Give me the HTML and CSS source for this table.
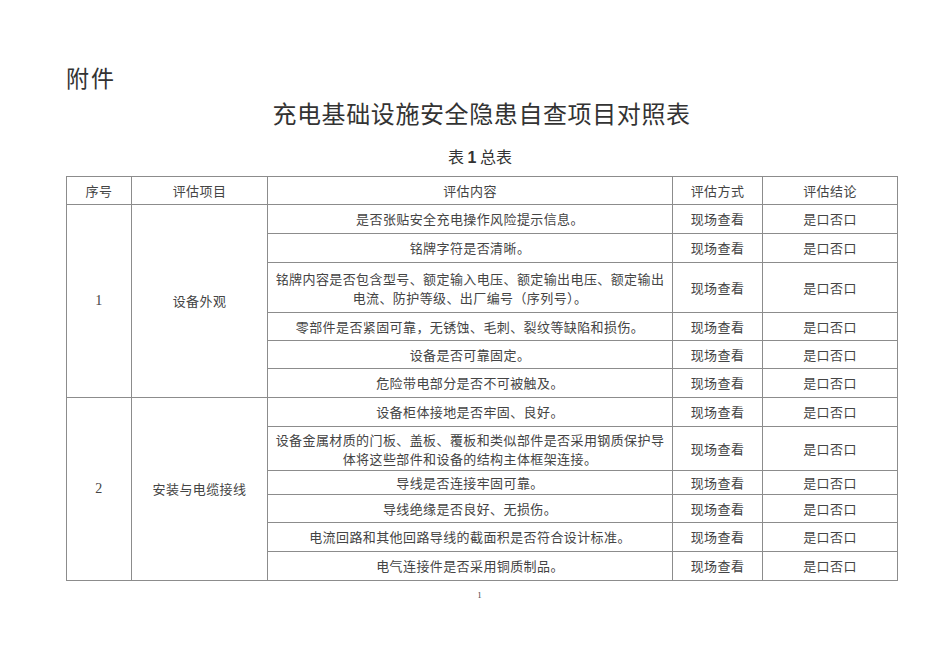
FILE: index.html
```html
<!DOCTYPE html>
<html lang="zh-CN">
<head>
<meta charset="utf-8">
<title>充电基础设施安全隐患自查项目对照表</title>
<link rel="stylesheet" href="styles.css">
</head>
<body>
<div class="page">
  <div class="attach">附件</div>
  <div class="head">
    <h1 class="title">充电基础设施安全隐患自查项目对照表</h1>
    <div class="subtitle">表 <b class="num">1</b> 总表</div>
  </div>
  <table class="grid">
    <colgroup>
      <col class="c-no">
      <col class="c-item">
      <col class="c-content">
      <col class="c-method">
      <col class="c-result">
    </colgroup>
    <thead>
      <tr class="h28"><th>序号</th><th>评估项目</th><th>评估内容</th><th>评估方式</th><th>评估结论</th></tr>
    </thead>
    <tbody>
      <tr class="h29">
        <td rowspan="6" class="no">1</td>
        <td rowspan="6">设备外观</td>
        <td>是否张贴安全充电操作风险提示信息。</td><td>现场查看</td><td>是口否口</td>
      </tr>
      <tr class="h29"><td>铭牌字符是否清晰。</td><td>现场查看</td><td>是口否口</td></tr>
      <tr class="h50"><td class="multi">铭牌内容是否包含型号、额定输入电压、额定输出电压、额定输出<br>电流、防护等级、出厂编号（序列号）。</td><td>现场查看</td><td>是口否口</td></tr>
      <tr class="h28"><td>零部件是否紧固可靠，无锈蚀、毛刺、裂纹等缺陷和损伤。</td><td>现场查看</td><td>是口否口</td></tr>
      <tr class="h28"><td>设备是否可靠固定。</td><td>现场查看</td><td>是口否口</td></tr>
      <tr class="h29"><td>危险带电部分是否不可被触及。</td><td>现场查看</td><td>是口否口</td></tr>
      <tr class="h29">
        <td rowspan="6" class="no">2</td>
        <td rowspan="6">安装与电缆接线</td>
        <td>设备柜体接地是否牢固、良好。</td><td>现场查看</td><td>是口否口</td>
      </tr>
      <tr class="h44"><td class="multi">设备金属材质的门板、盖板、覆板和类似部件是否采用钢质保护导<br>体将这些部件和设备的结构主体框架连接。</td><td>现场查看</td><td>是口否口</td></tr>
      <tr class="h24"><td>导线是否连接牢固可靠。</td><td>现场查看</td><td>是口否口</td></tr>
      <tr class="h28"><td>导线绝缘是否良好、无损伤。</td><td>现场查看</td><td>是口否口</td></tr>
      <tr class="h29"><td>电流回路和其他回路导线的截面积是否符合设计标准。</td><td>现场查看</td><td>是口否口</td></tr>
      <tr class="h29"><td>电气连接件是否采用铜质制品。</td><td>现场查看</td><td>是口否口</td></tr>
    </tbody>
  </table>
  <div class="pageno">1</div>
</div>
</body>
</html>
```

FILE: styles.css
```css
html, body {
  margin: 0;
  padding: 0;
  background: #ffffff;
}

body {
  font-family: "Noto Sans CJK SC", "Noto Sans", sans-serif;
  color: #333;
}

.page {
  width: 831px;
  padding: 62px 0 0 66px;
}

.attach {
  font-size: 23px;
  line-height: 30px;
  height: 30px;
  letter-spacing: 2px;
  color: #333;
}

.head {
  text-align: center;
}

.title {
  margin: 6px 0 0 0;
  font-size: 24px;
  font-weight: normal;
  line-height: 30px;
  letter-spacing: 0.6px;
  color: #333;
}

.subtitle {
  margin-top: 16px;
  padding-right: 3px;
  font-size: 16px;
  line-height: 24px;
  height: 24px;
  color: #333;
}

.subtitle .num {
  font-family: "Liberation Sans", sans-serif;
  font-weight: bold;
}

.grid {
  margin-top: 8px;
  width: 831px;
  border-collapse: collapse;
  table-layout: fixed;
  font-size: 13px;
  letter-spacing: 0.4px;
  color: #444;
}

.c-no { width: 65px; }
.c-item { width: 136px; }
.c-content { width: 405px; }
.c-method { width: 90px; }
.c-result { width: 135px; }

.grid th,
.grid td {
  border: 1px solid #8c8c8c;
  padding: 0 4px;
  text-align: center;
  vertical-align: middle;
  font-weight: normal;
  line-height: 18px;
  white-space: nowrap;
}

.grid td.multi {
  line-height: 19px;
}

.grid td.no {
  font-family: "Liberation Serif", serif;
  font-size: 14px;
}

.h24 { height: 24px; }
.h28 { height: 28px; }
.h29 { height: 29px; }
.h44 { height: 44px; }
.h50 { height: 50px; }

.pageno {
  margin-top: 10px;
  padding-right: 4px;
  text-align: center;
  font-family: "Liberation Serif", serif;
  font-size: 8px;
  line-height: 10px;
  color: #333;
}
```
